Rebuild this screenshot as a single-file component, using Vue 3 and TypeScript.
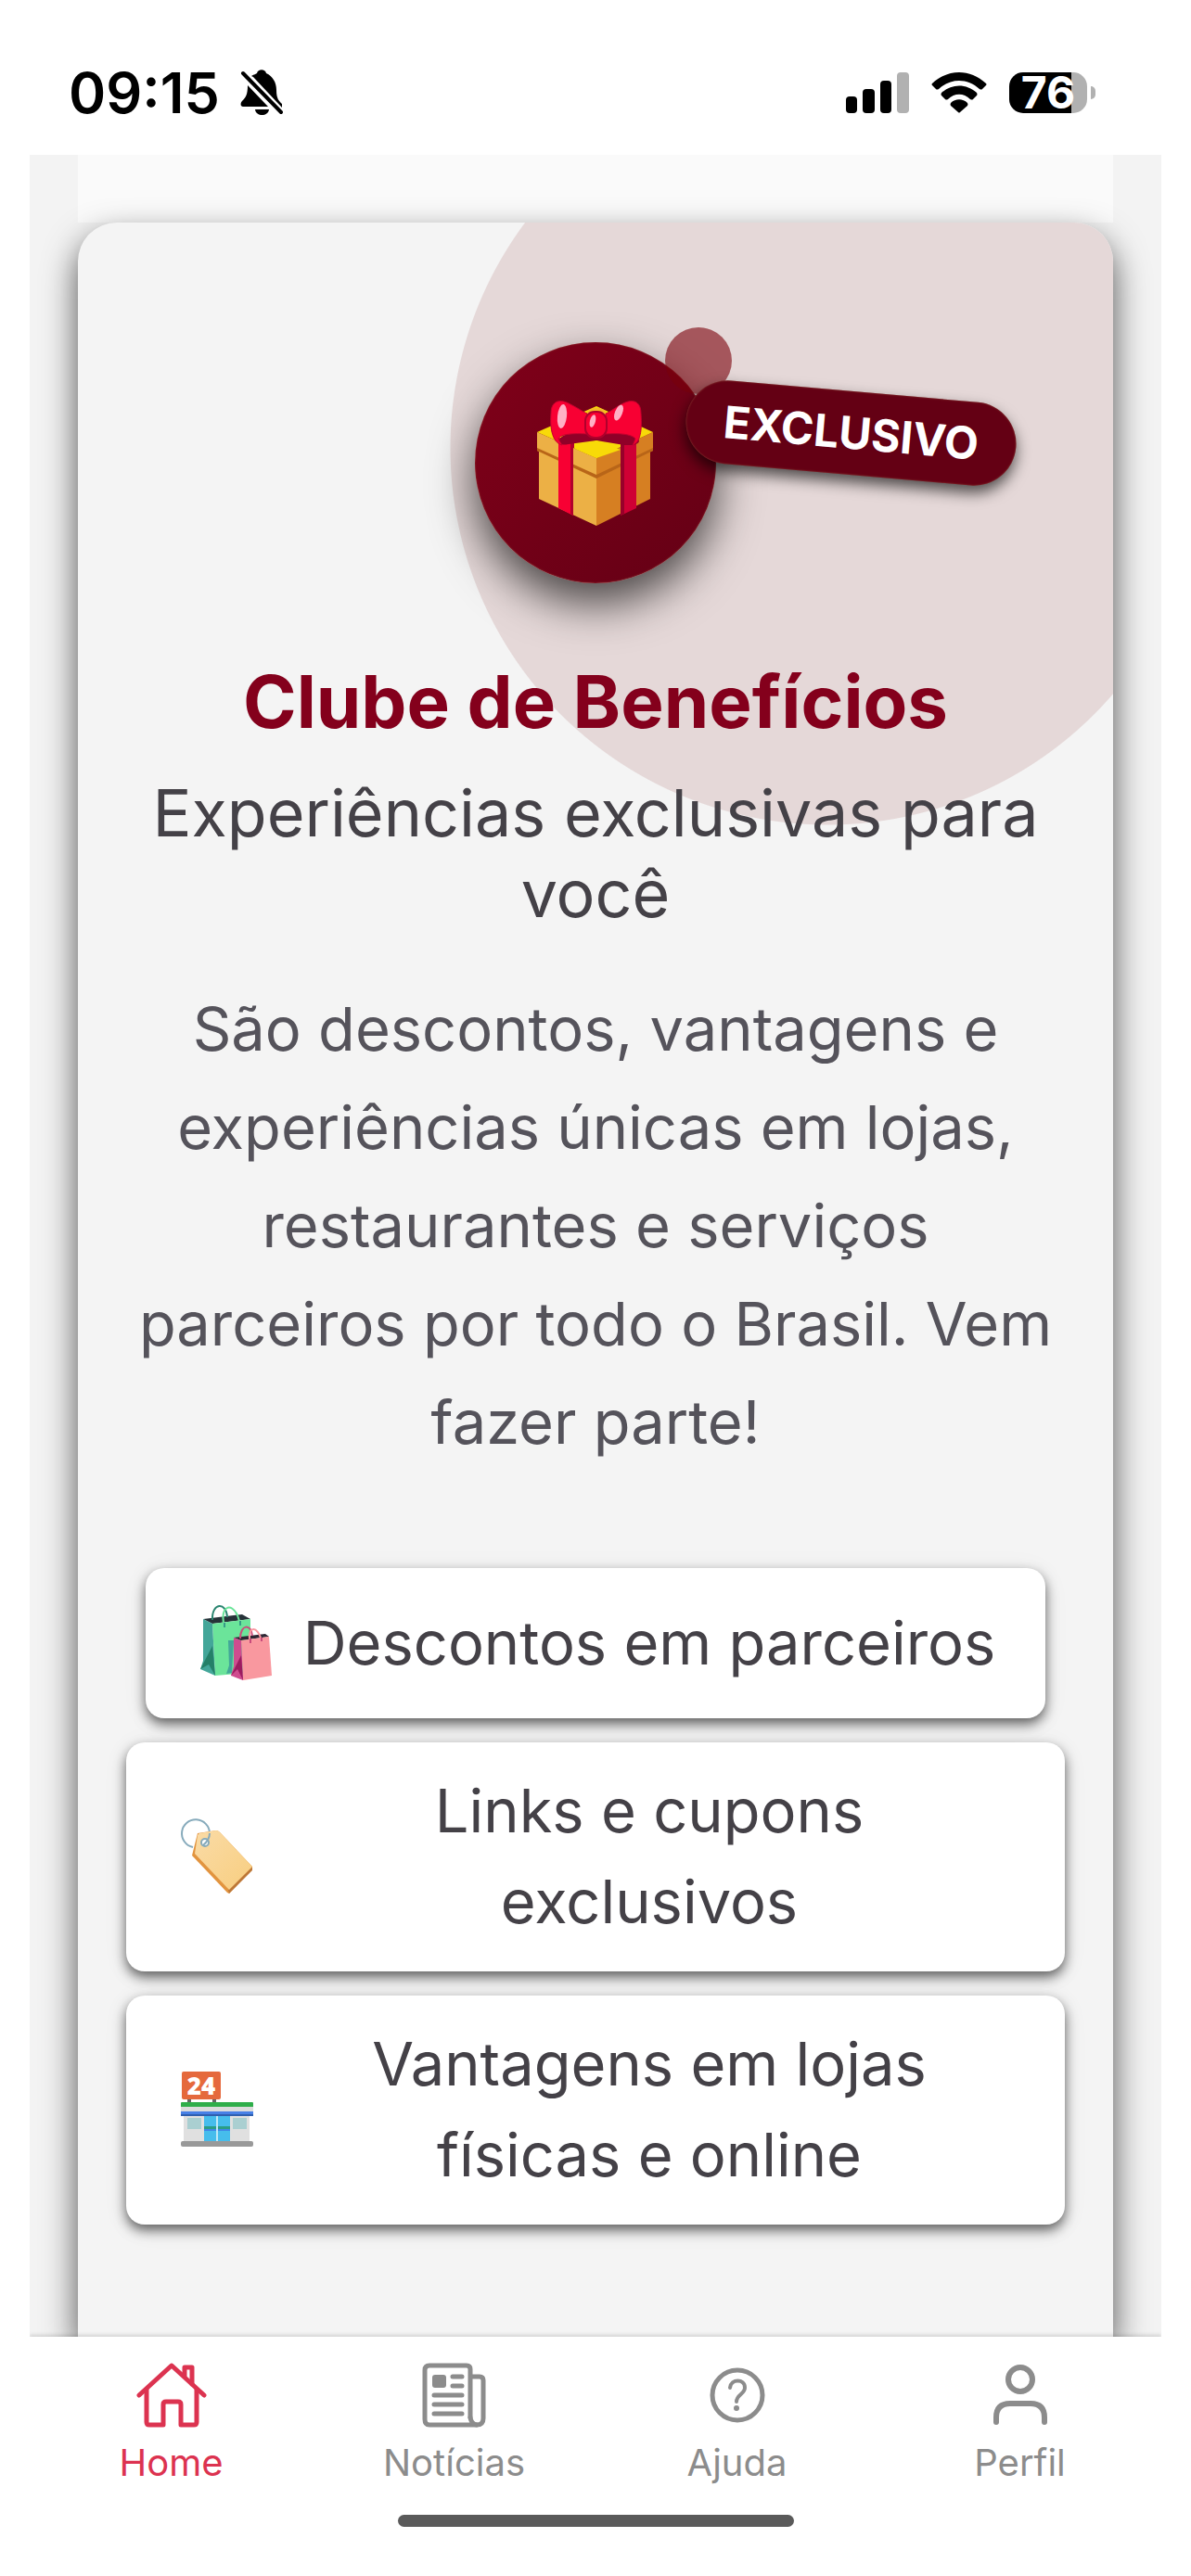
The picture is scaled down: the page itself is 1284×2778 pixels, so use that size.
<script setup lang="ts">
import { ref } from 'vue'

type TabId = 'home' | 'news' | 'help' | 'profile'

interface Feature {
  icon: 'bags' | 'tag' | 'store'
  text: string
}

const features: Feature[] = [
  { icon: 'bags', text: 'Descontos em parceiros' },
  { icon: 'tag', text: 'Links e cupons exclusivos' },
  { icon: 'store', text: 'Vantagens em lojas físicas e online' },
]

const tabs: { id: TabId; label: string }[] = [
  { id: 'home', label: 'Home' },
  { id: 'news', label: 'Notícias' },
  { id: 'help', label: 'Ajuda' },
  { id: 'profile', label: 'Perfil' },
]

const activeTab = ref<TabId>('home')
</script>

<template>
  <div class="app">
    <header class="status">
      <span class="time">09:15</span>
      <svg class="bell" width="46" height="50" viewBox="0 0 46 50" aria-hidden="true">
        <path d="M12 7 C15 5 17 5 18 4 C19 -1 27 -1 28 4 C35 7 39 14 39 22 C39 32 42 34 45 37 V41 L14 8 Z" />
        <path d="M8 17 L30 40 H3 C0 40 0 36 2 34 C6 30 8 27 8 17 Z" />
        <path d="M16 43 H31 C30 51 17 51 16 43 Z" />
        <path d="M3 4 L44 46" fill="none" stroke="#000" stroke-width="4" stroke-linecap="round" />
      </svg>
      <div class="status-right">
        <svg width="68" height="44" viewBox="0 0 68 44" aria-hidden="true">
          <rect x="0" y="26" width="12" height="18" rx="4" />
          <rect x="18" y="18" width="13" height="26" rx="4" />
          <rect x="37" y="9" width="12" height="35" rx="4" />
          <rect x="55" y="0" width="13" height="44" rx="4" fill="#b1b1b1" />
        </svg>
        <svg width="60" height="44" viewBox="0 0 60 44" aria-hidden="true">
          <path d="M1 12 C18 -4 42 -4 59 12 Q60 13 59 14 L55 18 Q54 19 52 18 C39 6 21 6 8 18 Q6 19 5 18 L1 14 Q0 13 1 12 Z" />
          <path d="M11 22 C22 12 38 12 49 22 Q50 24 49 25 L45 29 Q44 30 42 29 C35 22 25 22 18 29 Q16 30 15 29 L11 25 Q10 24 11 22 Z" />
          <path d="M21 33 C26 28 34 28 39 33 Q40 35 39 36 L31 43 Q30 44 29 43 L21 36 Q20 35 21 33 Z" />
        </svg>
        <div class="battery">
          <div class="battery-cell"><span>76</span></div>
          <div class="battery-tip"></div>
        </div>
      </div>
    </header>

    <main class="page">
      <div class="strip"></div>
      <section class="card">
        <div class="halo"></div>
        <div class="hero">
          <svg class="gift" width="126" height="136" viewBox="0 0 126 136" aria-hidden="true">
            <path d="M2 46 L64 76 V135 L2 106 Z" fill="#ecb045" />
            <path d="M64 76 L122 46 V106 L64 135 Z" fill="#d67f22" />
            <path d="M0 34 L64 62 V84 L0 54 Z" fill="#ecb045" />
            <path d="M64 62 L125 34 V54 L64 84 Z" fill="#d67f22" />
            <path d="M0 51 L64 80 V84 L0 54 Z M64 80 L125 51 V54 L64 84 Z" fill="#b86518" />
            <path d="M0 34 L64 6 L125 34 L64 62 Z" fill="#f8da08" />
            <path d="M23 40 H39 V124 L23 116 Z" fill="#f80033" />
            <path d="M36 44 H40 V51 H39 V124 L36 122 Z" fill="#b2002c" />
            <path d="M90 44 H107 V116 L90 124 Z" fill="#cf0034" />
            <path d="M90 44 H94 V122 L90 124 Z" fill="#98002a" />
            <path d="M24 44 C23 35 45 32 64 38 C83 32 110 35 110 44 C108 49 98 48 94 48 L64 43 L34 47 C28 48 24 48 24 44 Z" fill="#900028" />
            <path d="M64 43 L90 53 L64 62 L41 52 Z" fill="#f8da08" />
            <ellipse cx="64" cy="13" rx="10" ry="5" fill="#f5b82a" />
            <path d="M15 14 C15 -1 26 -2 36 4 C46 9 49 12 54 14 V36 C40 35 25 36 23 41 C24 44 26 46 27 48 C15 45 14 26 15 14 Z" fill="#f80033" stroke="#c3002e" />
            <path d="M112 14 C112 -1 101 -2 91 4 C82 9 79 12 74 14 V36 C88 35 102 36 106 41 C105 44 104 46 103 48 C113 45 113 26 112 14 Z" fill="#f80033" stroke="#c3002e" />
            <rect x="52" y="12" width="23" height="28" rx="10" fill="#f80033" stroke="#b0002c" stroke-width="2" />
            <ellipse cx="27" cy="17" rx="5" ry="13" fill="#ffb0c5" transform="rotate(6 27 17)" />
            <ellipse cx="88" cy="13" rx="4" ry="9" fill="#ffb0c5" transform="rotate(22 88 13)" />
            <ellipse cx="60" cy="22" rx="3" ry="7" fill="#ffb0c5" transform="rotate(14 60 22)" />
          </svg>
          <span class="dot"></span>
          <span class="badge">EXCLUSIVO</span>
        </div>
        <h1>Clube de Benefícios</h1>
        <h2>Experiências exclusivas para você</h2>
        <p class="intro">
          São descontos, vantagens e experiências únicas em lojas, restaurantes e serviços parceiros
          por todo o Brasil. Vem fazer parte!
        </p>

        <ul class="features">
          <li v-for="feature in features" :key="feature.icon">
            <svg v-if="feature.icon === 'bags'" class="emoji" viewBox="-5 -4 90 90" aria-hidden="true">
              <path d="M3 15 L45 10 L54 15 L13 20 Z" fill="#263238" />
              <path d="M13 16 C12 -3 28 -4 29 13" fill="none" stroke="#2a8570" stroke-width="2" />
              <path d="M13 20 L54 15 V73 L16 76 Z" fill="#6be49a" />
              <path d="M3 15 L13 20 L16 76 L0 69 L3 60 Z" fill="#43a699" />
              <path d="M13 44 L16 76 L9 64 L0 69 Z" fill="#248068" />
              <path d="M26 24 C20 0 34 -3 40 11 Q42 16 43 22" fill="none" stroke="#6be49a" stroke-width="2" />
              <path d="M26 24 V19 M43 22 V17" stroke="#369b88" stroke-width="2" />
              <path d="M30 38 H36 L34 73 L28 74 L31 65 Z" fill="#43a699" />
              <path d="M36 35 L70 31 L74 34 L44 38 Z" fill="#2d2633" />
              <path d="M43 36 C43 20 55 20 56 33" fill="none" stroke="#c94c7c" stroke-width="2" />
              <path d="M44 38 L74 34 L77 76 L46 81 Z" fill="#f9989f" />
              <path d="M36 35 L44 38 L46 81 L33 76 L36 66 Z" fill="#cf4c8f" />
              <path d="M44 54 L46 81 L40 69 L33 76 Z" fill="#9c1c60" />
              <path d="M54 41 C49 23 62 20 66 39" fill="none" stroke="#f9989f" stroke-width="2" />
              <path d="M54 41 V36 M66 39 V35" stroke="#c94c7c" stroke-width="2" />
            </svg>
            <svg v-else-if="feature.icon === 'tag'" class="emoji" viewBox="-5 -4 90 90" aria-hidden="true">
              <defs>
                <linearGradient id="tagFill" x1="0" y1="0" x2="1" y2="1">
                  <stop offset="0" stop-color="#fadba6" />
                  <stop offset="1" stop-color="#f8ce80" />
                </linearGradient>
              </defs>
              <path d="M13 31 A15 15 0 1 1 31 16" fill="none" stroke="#86aabb" stroke-width="2" />
              <path d="M18 16 L38 13 Q40 13 42 15 L77 52 V55 L52 81 L50 80 L12 40 Z" fill="#e2943f" />
              <path d="M77 52 V56 L52 81 L51 77 Z" fill="#bd7838" />
              <path d="M20 16 L38 13 Q40 13 42 15 L77 52 L52 77 L15 38 L18 18 Z" fill="url(#tagFill)" />
              <circle cx="26" cy="26" r="4" fill="#fff" stroke="#86aabb" stroke-width="2" />
              <path d="M31 16 Q31 23 24 29" fill="none" stroke="#86aabb" stroke-width="2" />
            </svg>
            <svg v-else class="emoji" viewBox="-5 -4 90 90" aria-hidden="true">
              <rect x="7" y="29" width="4" height="5" fill="#666" />
              <rect x="34" y="29" width="4" height="5" fill="#666" />
              <rect x="1" y="0" width="42" height="30" rx="2" fill="#e5693c" />
              <text x="22" y="25" text-anchor="middle" class="sign">24</text>
              <rect x="3" y="40" width="71" height="36" fill="#e0e0e0" />
              <rect x="0" y="33" width="78" height="6" rx="1" fill="#2fae4a" />
              <rect x="0" y="38" width="78" height="5" fill="#dcdcdc" />
              <rect x="0" y="43" width="78" height="5" fill="#4780e6" />
              <rect x="0" y="46" width="78" height="2" fill="#2f5fae" />
              <rect x="7" y="50" width="15" height="12" fill="#aacfd1" />
              <rect x="56" y="50" width="15" height="12" fill="#aacfd1" />
              <rect x="25" y="48" width="28" height="27" fill="#46bdec" />
              <rect x="25" y="59" width="28" height="3" fill="#2a9d86" />
              <rect x="25" y="62" width="28" height="2" fill="#3f86e8" />
              <rect x="38" y="48" width="2" height="27" fill="#bfe8f8" />
              <rect x="0" y="75" width="78" height="6" rx="2" fill="#999" />
            </svg>
            <span class="feature-text">{{ feature.text }}</span>
          </li>
        </ul>
      </section>
    </main>

    <nav class="tabs">
      <div class="tab-row">
        <button
          v-for="tab in tabs"
          :key="tab.id"
          type="button"
          class="tab"
          :class="{ active: tab.id === activeTab }"
          @click="activeTab = tab.id"
        >
          <svg width="76" height="72" viewBox="0 0 76 72" fill="none" stroke="currentColor" stroke-width="5" stroke-linecap="round" stroke-linejoin="round" aria-hidden="true">
            <template v-if="tab.id === 'home'">
              <path d="M3 36 L38 4 L73 36" />
              <path d="M11 30 V65 Q11 68 14 68 H29 V46 Q29 43 32 43 H45 Q48 43 48 46 V68 H62 Q65 68 65 65 V30" />
              <path d="M52 15 V6 H60 V24" />
            </template>
            <template v-else-if="tab.id === 'news'">
              <path d="M55 60 V8 Q55 4 51 4 H11 Q6 4 6 9 V62 Q6 68 11 68 H62 Q69 68 69 61 V20 Q69 16 65 16 H56" />
              <path d="M55 60 Q56 67 62 68" />
              <rect x="14" y="14" width="15" height="14" rx="3" fill="currentColor" stroke="none" />
              <path d="M36 16 H46 M36 26 H46 M16 36 H46 M16 46 H46 M16 56 H46" />
            </template>
            <template v-else-if="tab.id === 'help'">
              <circle cx="38" cy="36" r="27" />
              <path d="M30 28 C31 18 46 18 46 28 C46 35 37 35 37 43" stroke-width="4" />
              <circle cx="37" cy="50" r="3" fill="currentColor" stroke="none" />
            </template>
            <template v-else>
              <circle cx="38" cy="19" r="13" stroke-width="6" />
              <path d="M12 65 V60 Q12 45 27 45 H49 Q64 45 64 60 V65" stroke-width="6" />
            </template>
          </svg>
          <span>{{ tab.label }}</span>
        </button>
      </div>
      <div class="home-bar"></div>
    </nav>
  </div>
</template>

<style>
body {
  margin: 0;
  background: #fff;
}
</style>

<style scoped>
.app {
  display: flex;
  flex-direction: column;
  min-height: 100vh;
  background: #fff;
  font-family: Inter, 'Liberation Sans', sans-serif;
}

.status {
  box-sizing: border-box;
  display: flex;
  align-items: center;
  height: 167px;
  padding: 32px 103px 0 74px;
}
.time {
  font-size: 61px;
  line-height: 64px;
  font-weight: 600;
}
.bell {
  margin-left: 22px;
}
.status-right {
  display: flex;
  align-items: center;
  gap: 24px;
  margin-left: auto;
}
.battery {
  display: flex;
  align-items: center;
  gap: 4px;
}
.battery-cell {
  width: 84px;
  height: 44px;
  border-radius: 15px;
  background: linear-gradient(90deg, #000 80%, #b1b1b1 80%);
  color: #fff;
  font-size: 48px;
  line-height: 44px;
  font-weight: 700;
  text-align: center;
}
.battery-tip {
  width: 5px;
  height: 14px;
  border-radius: 0 6px 6px 0;
  background: #b1b1b1;
}

.page {
  flex: 1;
  display: flex;
  flex-direction: column;
  margin: 0 32px;
  padding: 0 52px;
  overflow: hidden;
  background: #f3f3f3;
}
.strip {
  height: 73px;
  background: #fafafa;
}
.card {
  position: relative;
  flex: 1;
  padding: 129px 52px 120px;
  border-radius: 42px 42px 0 0;
  background: #f4f4f4;
  box-shadow: 0 16px 36px rgba(0, 0, 0, 0.68);
  clip-path: inset(-73px -52px 0 -52px);
  text-align: center;
}
.halo {
  position: absolute;
  inset: 0;
  border-radius: 42px 42px 0 0;
  background: radial-gradient(circle 407px at calc(100% - 308px) 243px, #e5d8d8 406px, transparent 407px);
}
.hero {
  position: relative;
  display: flex;
  align-items: center;
  justify-content: center;
  width: 260px;
  height: 260px;
  margin: 0 auto 80px;
  border-radius: 50%;
  background: linear-gradient(135deg, #800019, #640015);
  box-shadow: 0 22px 48px rgba(0, 0, 0, 0.68), inset 0 0 2px rgba(160, 90, 70, 0.8);
}
.gift {
  margin-top: 2px;
}
.dot {
  position: absolute;
  top: -16px;
  right: -17px;
  width: 72px;
  height: 72px;
  border-radius: 50%;
  background: rgba(122, 0, 10, 0.6);
}
.badge {
  position: absolute;
  top: 53px;
  left: 227px;
  width: 357px;
  border-radius: 45px;
  background: #640014;
  box-shadow: 0 8px 16px rgba(0, 0, 0, 0.65), inset 0 0 2px rgba(160, 90, 70, 0.8);
  color: #fff;
  font-size: 48px;
  line-height: 90px;
  font-weight: 700;
  transform: rotate(5deg);
}

h1,
h2,
.intro {
  position: relative;
  margin: 0;
}
h1 {
  color: #84001c;
  font-size: 78px;
  line-height: 96px;
  font-weight: 700;
}
h2 {
  margin-top: 28px;
  color: #444147;
  font-size: 70px;
  line-height: 87px;
  font-weight: 400;
}
.intro {
  margin-top: 50px;
  color: #55535b;
  font-size: 65px;
  line-height: 106px;
}

.features {
  position: relative;
  display: flex;
  flex-direction: column;
  align-items: center;
  gap: 26px;
  margin: 104px 0 0;
  padding: 0;
  list-style: none;
}
.features li {
  box-sizing: border-box;
  display: flex;
  align-items: center;
  gap: 26px;
  min-height: 162px;
  max-width: 100%;
  padding: 25px 54px 26px;
  border-radius: 20px;
  background: #fff;
  box-shadow: 0 6px 13px rgba(0, 0, 0, 0.6), 0 4px 30px rgba(0, 0, 0, 0.06);
}
.emoji {
  flex: none;
  width: 90px;
  height: 90px;
}
.sign {
  fill: #fff;
  font-family: 'Open Sans', sans-serif;
  font-size: 26px;
  font-weight: 800;
}
.feature-text {
  color: #444147;
  font-size: 65px;
  line-height: 98px;
}

.tabs {
  position: relative;
  margin: 0 32px;
  padding: 27px 0 53px;
  background: #fff;
  box-shadow: 0 -2px 4px rgba(0, 0, 0, 0.14);
  clip-path: inset(-20px 0 0 0);
}
.tab-row {
  display: flex;
}
.tab {
  flex: 1;
  display: flex;
  flex-direction: column;
  align-items: center;
  gap: 12px;
  padding: 0;
  border: 0;
  background: none;
  color: #8c8c8c;
  font: inherit;
  font-size: 40px;
  line-height: 50px;
}
.tab.active {
  color: #dc3350;
}
.home-bar {
  width: 35%;
  height: 13px;
  margin: 31px auto 0;
  border-radius: 7px;
  background: #5a5a5a;
}
</style>
